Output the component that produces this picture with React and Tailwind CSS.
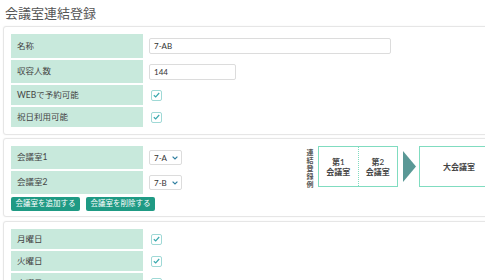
import React from "react";

const font = { fontFamily: '"Lato", "Noto Sans CJK JP", sans-serif' };

function Check() {
  return (
    <span className="flex h-[11px] w-[11px] items-center justify-center rounded-[2px] border border-[#9fd9d6] bg-white">
      <svg width="7" height="6" viewBox="0 0 7 6">
        <path d="M0.8 3.2 L2.7 4.9 L6.2 1" fill="none" stroke="#3aa9ae" strokeWidth="1.2" />
      </svg>
    </span>
  );
}

function Select({ value }) {
  return (
    <div className="flex h-[15px] w-[33px] items-center justify-between rounded-[2px] border border-[#dcdcdc] bg-white pl-[4px] pr-[3px] text-[8px] text-[#333]">
      <span>{value}</span>
      <svg width="6" height="4" viewBox="0 0 6 4">
        <path d="M0.6 0.6 L3 3 L5.4 0.6" fill="none" stroke="#2f7fa0" strokeWidth="1.2" />
      </svg>
    </div>
  );
}

function Row({ label, h, children }) {
  return (
    <div className={`flex ${h}`}>
      <div className="flex w-[132px] items-center bg-[#c8e9dc] pl-[6px] text-[8.5px] text-[#444]">
        {label}
      </div>
      <div className="ml-[6px] flex items-center">{children}</div>
    </div>
  );
}

function Panel({ children, className = "" }) {
  return (
    <div className={`rounded-[3px] border border-[#e6e6e6] bg-white shadow-[0_0_2px_rgba(0,0,0,0.06)] ${className}`}>
      {children}
    </div>
  );
}

export default function App() {
  const boxText = "text-[8px] font-semibold leading-[10px] text-[#444] text-center";
  return (
    <div className="h-[280px] w-[485px] overflow-hidden bg-white" style={font}>
      <div className="w-[520px] pl-[3px]">
        <h1 className="pl-[2px] pt-[4px] text-[13px] leading-[18px] text-[#555]">会議室連結登録</h1>

        <Panel className="mt-[4px] px-[7px] pb-[7px] pt-[7px]">
          <div className="flex flex-col gap-[2px]">
            <Row label="名称" h="h-[24px]">
              <div className="flex h-[16px] w-[242px] items-center rounded-[2px] border border-[#dcdcdc] px-[4px] text-[8px] text-[#333]">7-AB</div>
            </Row>
            <Row label="収容人数" h="h-[23px]">
              <div className="flex h-[16px] w-[87px] items-center rounded-[2px] border border-[#dcdcdc] px-[4px] text-[8px] text-[#333]">144</div>
            </Row>
            <Row label="WEBで予約可能" h="h-[20px]">
              <span className="ml-[2px]"><Check /></span>
            </Row>
            <Row label="祝日利用可能" h="h-[20px]">
              <span className="ml-[2px]"><Check /></span>
            </Row>
          </div>
        </Panel>

        <Panel className="mt-[3px] flex px-[7px] pb-[5px] pt-[7px]">
          <div className="flex w-[295px] flex-col gap-[2px]">
            <Row label="会議室1" h="h-[23px]">
              <Select value="7-A" />
            </Row>
            <Row label="会議室2" h="h-[23px]">
              <Select value="7-B" />
            </Row>
            <div className="mt-[1px] flex gap-[6px]">
              <button className="h-[14px] w-[69px] rounded-[2px] bg-[#1f9a84] text-[7.5px] leading-[14px] text-white">会議室を追加する</button>
              <button className="h-[14px] w-[69px] rounded-[2px] bg-[#1f9a84] text-[7.5px] leading-[14px] text-white">会議室を削除する</button>
            </div>
          </div>
          <div className="flex items-start">
            <div className="mt-[2px] flex w-[8px] flex-col items-center text-[7px] font-semibold leading-[8px] text-[#555]">
              <span>連</span><span>結</span><span>登</span><span>録</span><span>例</span>
            </div>
            <div className="ml-[4px] flex h-[41px] w-[80px] border border-[#80dcc0]">
              <div className={`flex flex-1 items-center justify-center border-r border-dotted border-[#80dcc0] ${boxText}`}>第1<br />会議室</div>
              <div className={`flex flex-1 items-center justify-center ${boxText}`}>第2<br />会議室</div>
            </div>
            <svg className="ml-[5px] mt-[5px]" width="13" height="31" viewBox="0 0 13 31">
              <polygon points="0,0 13,15.5 0,31" fill="#5a9896" />
            </svg>
            <div className={`ml-[3px] flex h-[41px] w-[80px] items-center justify-center border border-[#80dcc0] ${boxText}`}>大会議室</div>
          </div>
        </Panel>

        <Panel className="mt-[4px] px-[7px] pb-[7px] pt-[7px]">
          <div className="flex flex-col gap-[2px]">
            <Row label="月曜日" h="h-[20px]">
              <span className="ml-[2px]"><Check /></span>
            </Row>
            <Row label="火曜日" h="h-[20px]">
              <span className="ml-[2px]"><Check /></span>
            </Row>
            <Row label="水曜日" h="h-[20px]">
              <span className="ml-[2px]"><Check /></span>
            </Row>
          </div>
        </Panel>
      </div>
    </div>
  );
}
